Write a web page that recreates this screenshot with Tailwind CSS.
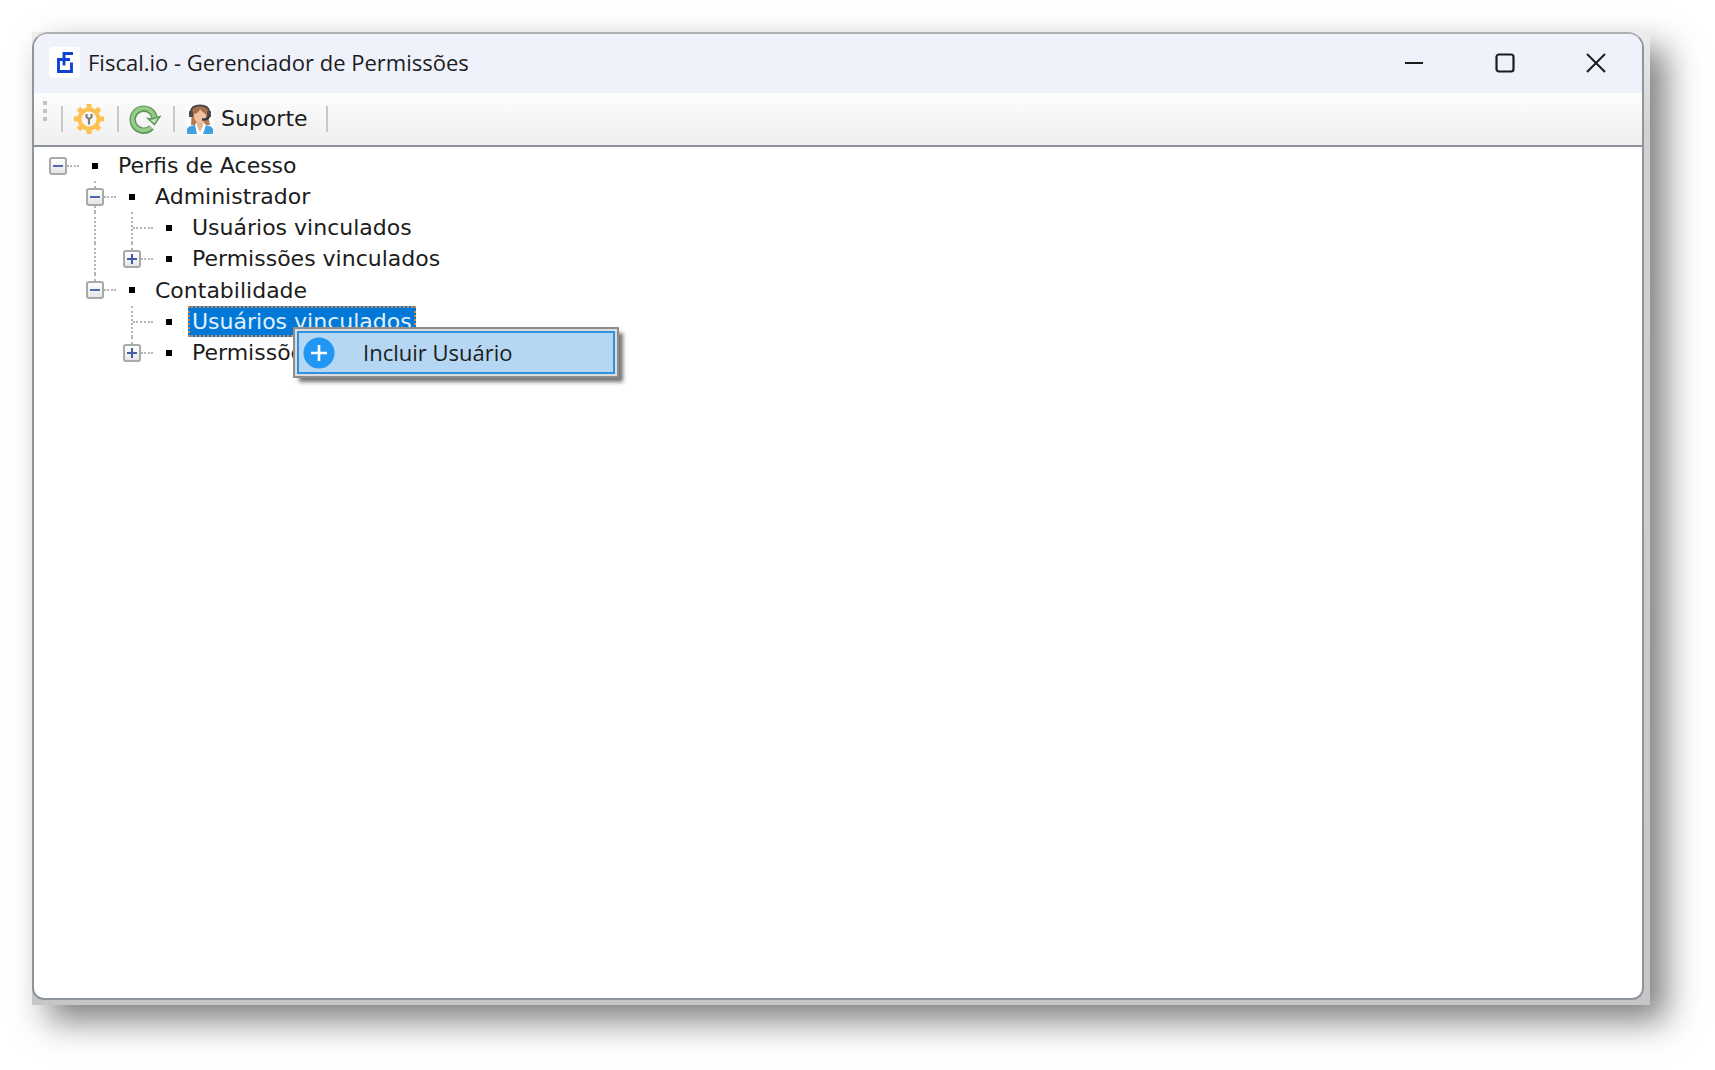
<!DOCTYPE html>
<html lang="pt-BR">
<head>
<meta charset="utf-8">
<meta name="viewport" content="width=device-width, initial-scale=1">
<title>Fiscal.io - Gerenciador de Permissões</title>
<script src="https://cdn.jsdelivr.net/npm/@tailwindcss/browser@4"></script>
</head>
<body class="flex min-h-screen bg-white pt-8 pr-[65px] pb-[65px] pl-8 text-[#1c1c1c]">
<div class="flex flex-1 bg-linear-to-b from-[#ececec] via-[#d2d2d2] via-10% to-[#c6c6c6] pr-[6px] pb-[5px] shadow-[16px_16px_32px_rgba(0,0,0,0.5)]">
<div class="flex flex-1 flex-col overflow-hidden rounded-2xl rounded-b-xl border-2 border-[#8f959d] border-t-[#b0b0b2] bg-white">

  <!-- Title bar -->
  <header class="flex h-[59px] items-center bg-[#eff2fb] pb-[2px] pl-[15px]">
    <svg class="size-[31px]" viewBox="0 0 31 31" aria-hidden="true">
      <rect width="31" height="31" rx="4" fill="#fff"/>
      <path d="M24 6.500H15V18.500M8 12.500H21M9.500 12V24.500H22.500V15.500" fill="none" stroke="#0f43d6" stroke-width="2.900"/>
    </svg>
    <h1 class="ml-2 flex-1 pb-[2px] font-['Open_Sans',sans-serif] text-[22px] leading-8 whitespace-nowrap">Fiscal.io - Gerenciador de Permissões</h1>
    <button type="button" aria-label="Minimizar" class="flex h-full w-[91px] items-center justify-center">
      <svg class="size-5" viewBox="0 0 20 20"><path d="M1 10H19" stroke="#1b1b1b" stroke-width="2"/></svg>
    </button>
    <button type="button" aria-label="Maximizar" class="flex h-full w-[91px] items-center justify-center">
      <svg class="size-5" viewBox="0 0 20 20"><rect x="1.500" y="1.500" width="17" height="17" rx="2.500" fill="none" stroke="#1b1b1b" stroke-width="2.200"/></svg>
    </button>
    <button type="button" aria-label="Fechar" class="flex h-full w-[92px] items-center justify-center">
      <svg class="size-5" viewBox="0 0 20 20"><path d="M1 1L19 19M19 1L1 19" stroke="#1b1b1b" stroke-width="2"/></svg>
    </button>
  </header>

  <!-- Toolbar -->
  <div role="toolbar" class="flex h-[54px] items-center border-b-2 border-[#8b9099] bg-linear-to-b from-[#fdfdfd] to-[#efefef] pl-[9px] font-['DejaVu_Sans',sans-serif]">
    <div class="mb-4 flex flex-col gap-1">
      <i class="size-1 bg-[#c2c2c2]"></i><i class="size-1 bg-[#c2c2c2]"></i><i class="size-1 bg-[#c2c2c2]"></i>
    </div>
    <div class="ml-[14px] h-[26px] w-[2px] bg-[#c8c8c8]"></div>
    <button type="button" aria-label="Configurações" class="ml-[10px]">
      <svg class="size-8" viewBox="0 0 32 32">
        <g stroke="#fcc14e" stroke-width="5">
          <path d="M16 1V31M1 16H31M5.400 5.400L26.600 26.600M26.600 5.400L5.400 26.600"/>
        </g>
        <circle cx="16" cy="16" r="9.500" fill="#f8f6f2" stroke="#fcc14e" stroke-width="4"/>
        <path d="M13.500 11V14L16 16L18.500 14V11M16 15V21.500" fill="none" stroke="#808080" stroke-width="2.200"/>
      </svg>
    </button>
    <div class="ml-[12px] h-[26px] w-[2px] bg-[#c8c8c8]"></div>
    <button type="button" aria-label="Atualizar" class="ml-[10px]">
      <svg class="size-8" viewBox="0 0 32 32" fill="none">
        <path d="M22.500 24.500A11 11 0 1 1 25.500 14.500" stroke="#5f9a5c" stroke-width="6.500"/>
        <path d="M22.200 24.300A11 11 0 1 1 25.500 15" stroke="#98cd89" stroke-width="3.500"/>
        <path d="M19 15.500L23 16L31 13.500L25.500 21.500Z" fill="#c5e3bb" stroke="#5f9a5c" stroke-width="1.500"/>
      </svg>
    </button>
    <div class="ml-[12px] h-[26px] w-[2px] bg-[#c8c8c8]"></div>
    <button type="button" class="ml-[11px] flex items-center gap-[7px] text-[22px] leading-8">
      <svg class="h-8 w-[28px]" viewBox="0 0 28 32" aria-hidden="true">
        <rect width="28" height="32" fill="#fcfcfc"/>
        <path d="M5 9Q6 2 14 2T23 9Q22 16 24 22H5Q6 15 5 9Z" fill="#b37a55"/>
        <path d="M1 31V26Q2 23 9 22L14 27L19 22Q26 23 27 26V31Z" fill="#3f9fe2"/>
        <path d="M9 22L11 19H17L20 22L17 31H11Z" fill="#fff"/>
        <path d="M11 17H17V23L14 29L11 23Z" fill="#e7b28c"/>
        <ellipse cx="14" cy="13" rx="6" ry="7" fill="#f0c19e"/>
        <path d="M8 11Q13 10 14 6Q17 10 20 11V6L14 4L8 6Z" fill="#a66d48"/>
        <path d="M4.500 10Q5 2.500 14 2.500T23.500 10" fill="none" stroke="#4f4a49" stroke-width="2"/>
        <path d="M3 8H7V14H3ZM21 8H25V14H21Z" fill="#4f4a49"/>
        <path d="M23 13Q22 17 16 16.500" fill="none" stroke="#37383f" stroke-width="2.500"/>
      </svg>
      Suporte
    </button>
    <div class="ml-[18px] h-[26px] w-[2px] bg-[#c8c8c8]"></div>
  </div>

  <!-- Profile tree -->
  <main class="relative flex-1 pt-[3px] pl-[15px] font-['DejaVu_Sans',sans-serif] text-[22px] leading-[27px] whitespace-nowrap">
    <ul role="tree" aria-label="Perfis de Acesso">
      <li role="treeitem" aria-expanded="true">
        <div class="flex h-[31px] items-center">
          <button type="button" aria-label="Recolher" class="flex size-[18px] items-center justify-center rounded-[3px] border-2 border-[#a9a9a9] bg-linear-to-b from-white to-[#e6e6e6]"><i class="h-[2px] w-[10px] bg-[#5069ad]"></i></button>
          <i class="w-3 border-t-2 border-dotted border-[#b4b4b4]"></i>
          <i class="ml-[13px] size-[6px] bg-black"></i>
          <span class="ml-4 border-2 border-transparent px-[2px]">Perfis de Acesso</span>
        </div>
        <ul role="group">
          <li role="treeitem" aria-expanded="true">
            <div class="flex h-[31px] items-center pl-[37px]">
              <div class="flex h-full w-[18px] flex-col items-center">
                <i class="flex-1 border-l-2 border-dotted border-[#b4b4b4]"></i>
                <button type="button" aria-label="Recolher" class="flex size-[18px] items-center justify-center rounded-[3px] border-2 border-[#a9a9a9] bg-linear-to-b from-white to-[#e6e6e6]"><i class="h-[2px] w-[10px] bg-[#5069ad]"></i></button>
                <i class="flex-1 border-l-2 border-dotted border-[#b4b4b4]"></i>
              </div>
              <i class="w-3 border-t-2 border-dotted border-[#b4b4b4]"></i>
              <i class="ml-[13px] size-[6px] bg-black"></i>
              <span class="ml-4 border-2 border-transparent px-[2px]">Administrador</span>
            </div>
            <ul role="group">
              <li role="treeitem">
                <div class="flex h-[31px] items-center pl-[45px]">
                  <i class="h-full w-[37px] border-l-2 border-dotted border-[#b4b4b4]"></i>
                  <i class="h-full border-l-2 border-dotted border-[#b4b4b4]"></i>
                  <i class="w-5 border-t-2 border-dotted border-[#b4b4b4]"></i>
                  <i class="ml-[13px] size-[6px] bg-black"></i>
                  <span class="ml-4 border-2 border-transparent px-[2px]">Usuários vinculados</span>
                </div>
              </li>
              <li role="treeitem" aria-expanded="false">
                <div class="flex h-[31px] items-center pl-[45px]">
                  <i class="h-full w-[29px] border-l-2 border-dotted border-[#b4b4b4]"></i>
                  <div class="flex h-full w-[18px] flex-col items-center">
                    <i class="flex-1 border-l-2 border-dotted border-[#b4b4b4]"></i>
                    <button type="button" aria-label="Expandir" class="flex size-[18px] items-center justify-center rounded-[3px] border-2 border-[#a9a9a9] bg-linear-to-b from-white to-[#e6e6e6]"><svg class="size-[10px]" viewBox="0 0 10 10"><path d="M0 5H10M5 0V10" stroke="#435da6" stroke-width="2"/></svg></button>
                    <i class="flex-1"></i>
                  </div>
                  <i class="w-3 border-t-2 border-dotted border-[#b4b4b4]"></i>
                  <i class="ml-[13px] size-[6px] bg-black"></i>
                  <span class="ml-4 border-2 border-transparent px-[2px]">Permissões vinculados</span>
                </div>
              </li>
            </ul>
          </li>
          <li role="treeitem" aria-expanded="true">
            <div class="flex h-8 items-center pl-[37px]">
              <div class="flex h-full w-[18px] flex-col items-center">
                <i class="flex-1 border-l-2 border-dotted border-[#b4b4b4]"></i>
                <button type="button" aria-label="Recolher" class="flex size-[18px] items-center justify-center rounded-[3px] border-2 border-[#a9a9a9] bg-linear-to-b from-white to-[#e6e6e6]"><i class="h-[2px] w-[10px] bg-[#5069ad]"></i></button>
                <i class="flex-1"></i>
              </div>
              <i class="w-3 border-t-2 border-dotted border-[#b4b4b4]"></i>
              <i class="ml-[13px] size-[6px] bg-black"></i>
              <span class="ml-4 border-2 border-transparent px-[2px]">Contabilidade</span>
            </div>
            <ul role="group">
              <li role="treeitem" aria-selected="true">
                <div class="flex h-[31px] items-center pl-[82px]">
                  <i class="h-full border-l-2 border-dotted border-[#b4b4b4]"></i>
                  <i class="w-5 border-t-2 border-dotted border-[#b4b4b4]"></i>
                  <i class="ml-[13px] size-[6px] bg-black"></i>
                  <span class="ml-4 border-2 border-dotted border-[#d98a4a] bg-[#0078d7] px-[2px] text-[#e4f1fc]">Usuários vinculados</span>
                </div>
              </li>
              <li role="treeitem" aria-expanded="false">
                <div class="flex h-[31px] items-center pl-[74px]">
                  <div class="flex h-full w-[18px] flex-col items-center">
                    <i class="flex-1 border-l-2 border-dotted border-[#b4b4b4]"></i>
                    <button type="button" aria-label="Expandir" class="flex size-[18px] items-center justify-center rounded-[3px] border-2 border-[#a9a9a9] bg-linear-to-b from-white to-[#e6e6e6]"><svg class="size-[10px]" viewBox="0 0 10 10"><path d="M0 5H10M5 0V10" stroke="#435da6" stroke-width="2"/></svg></button>
                    <i class="flex-1"></i>
                  </div>
                  <i class="w-3 border-t-2 border-dotted border-[#b4b4b4]"></i>
                  <i class="ml-[13px] size-[6px] bg-black"></i>
                  <span class="ml-4 border-2 border-transparent px-[2px]">Permissões</span>
                </div>
              </li>
            </ul>
          </li>
        </ul>
      </li>
    </ul>

    <!-- Context menu over the selected node -->
    <div role="menu" class="absolute top-[180px] left-[259px] w-[326px] border-2 border-[#8d8d8d] bg-[#dcdcdc] p-[2px] shadow-[5px_5px_4px_-1px_rgba(0,0,0,0.55)]">
      <button type="button" role="menuitem" class="flex h-[43px] w-full items-center border-2 border-[#2e92e2] bg-[#b5d7f3] pl-[4px] font-['Open_Sans',sans-serif] text-[22px] leading-8">
        <svg class="size-8" viewBox="0 0 32 32" aria-hidden="true"><circle cx="16" cy="16" r="15.500" fill="#2196f3"/><path d="M8 16H24M16 8V24" stroke="#fff" stroke-width="2.600"/></svg>
        <span class="ml-7 pb-[2px]">Incluir Usuário</span>
      </button>
    </div>
  </main>
</div>
</div>
</body>
</html>
